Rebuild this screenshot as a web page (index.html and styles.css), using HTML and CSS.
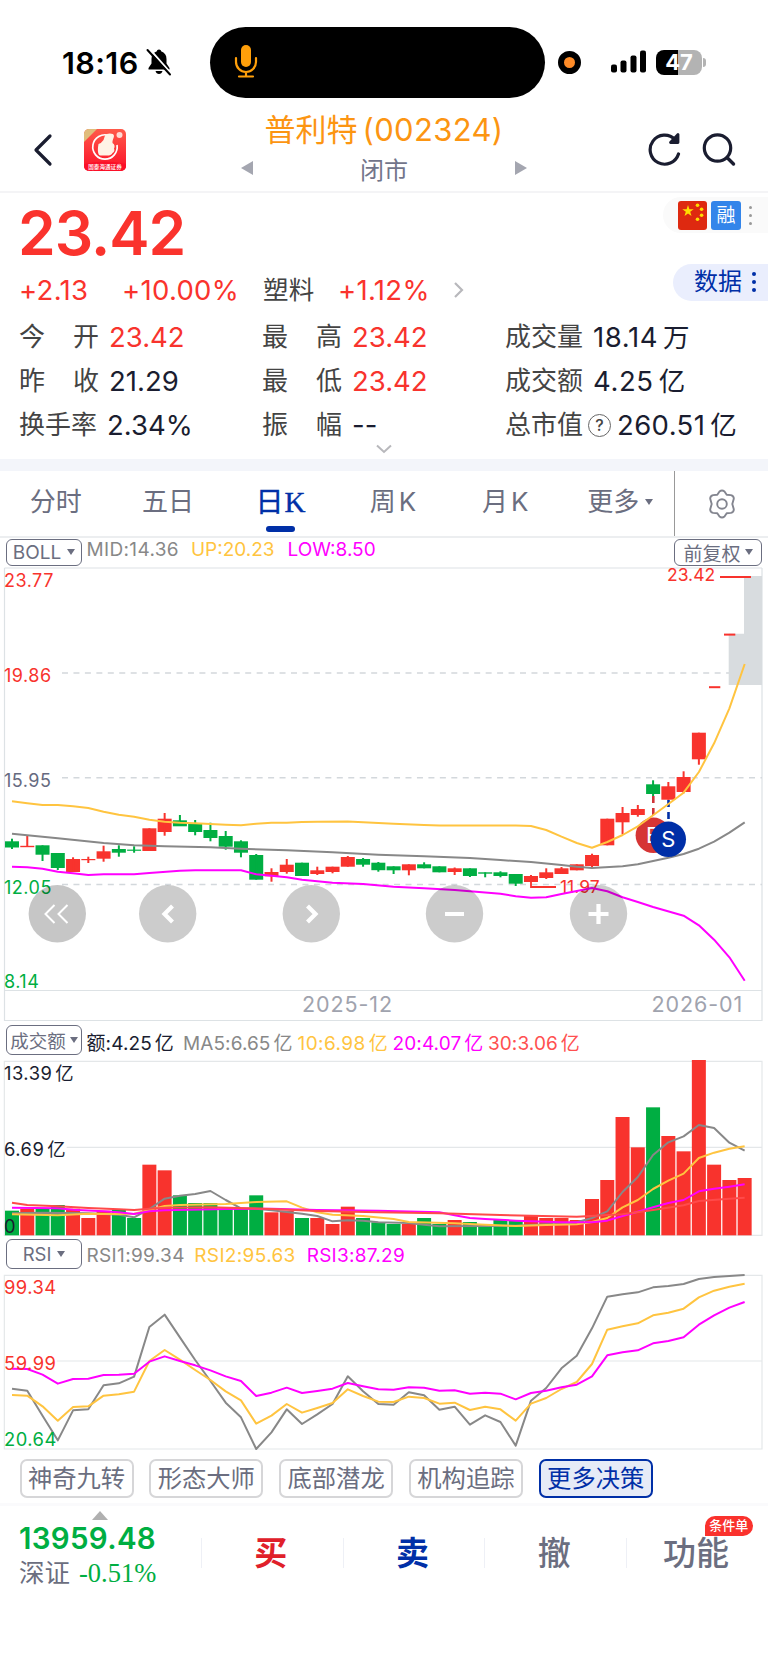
FILE: index.html
```html
<!DOCTYPE html>
<html lang="zh-CN">
<head>
    <meta charset="UTF-8">
    <meta name="viewport" content="width=device-width, initial-scale=1.0">
    <title>普利特(002324)</title>
    <link rel="stylesheet" href="styles.css">
</head>
<body>

    <!-- 状态栏 -->
    <div class="status-bar">
        <span class="time">18:16</span>
        <svg class="bell" width="26" height="28" viewBox="0 0 26 28">
            <path d="M13 1.500c-1.300 0-2 .8-2.100 1.800C7.300 4.400 5.500 7.300 5.500 11v4.500L2.500 20v1.500h21V20l-3-4.500V11c0-3.700-1.800-6.600-5.400-7.700C15 2.300 14.300 1.500 13 1.500z" fill="#000"/>
            <path d="M9.500 23h7c-.5 2-1.800 3-3.500 3s-3-1-3.500-3z" fill="#000"/>
            <path d="M3.500 1l22 25" stroke="#fff" stroke-width="2"/>
            <path d="M1.500 2l22.500 24.500" stroke="#000" stroke-width="2" stroke-linecap="round"/>
        </svg>
        <div class="island">
            <svg width="24" height="36" viewBox="0 0 24 36">
                <rect x="7" y="1" width="10" height="22" rx="5" fill="#ff9f0a"/>
                <path d="M2 14v4a10 10 0 0 0 20 0v-4M12 28v4.500M5 32.500h14" fill="none" stroke="#ff9f0a" stroke-width="2.200" stroke-linecap="round"/>
            </svg>
        </div>
        <span class="rec-dot"></span>
        <svg class="signal" width="36" height="24" viewBox="0 0 36 24">
            <rect x="0" y="14.500" width="6" height="8" rx="2"/>
            <rect x="9.500" y="10.500" width="6" height="12" rx="2"/>
            <rect x="19.500" y="5.500" width="6" height="17" rx="2"/>
            <rect x="29" y="0.500" width="6" height="22" rx="2"/>
        </svg>
        <div class="battery">47</div>
    </div>

    <!-- 标题 -->
    <div class="header">
        <svg class="back" width="20" height="34" viewBox="0 0 20 34"><path d="M17 3L3 17l14 14" fill="none" stroke="#1a1d30" stroke-width="3.200" stroke-linecap="round" stroke-linejoin="round"/></svg>
        <svg class="logo" width="42" height="42" viewBox="0 0 42 42">
            <defs>
                <linearGradient id="logoBg" x1="0" y1="0" x2="0" y2="1">
                    <stop offset="0" stop-color="#ff5a4a"/>
                    <stop offset="1" stop-color="#fb1028"/>
                </linearGradient>
                <clipPath id="logoClip"><rect width="42" height="42" rx="5"/></clipPath>
            </defs>
            <g clip-path="url(#logoClip)">
                <rect width="42" height="42" fill="url(#logoBg)"/>
                <path d="M0 0h13L0 13z" fill="#e0bd7c"/>
                <path d="M0 35q21-5 42 0v7H0z" fill="#fb1028"/>
                <path d="M25 6.500A12.200 12.200 0 1 0 33 16" fill="none" stroke="#fff" stroke-width="1.700"/>
                <path d="M14.500 15q3-1 5-4l1.500-4.500c1-2.500 9-3 9 .5 0 2-2 4.500-1.500 7 2.500 1.500 2.500 4 1.500 5.500 1 2 0 4-1.500 4.500-1 2-3 2.500-5 2.500h-7c-3 0-3-6-2-11.500z" fill="#fff3e6"/>
                <circle cx="35.500" cy="6" r="3" fill="#ffd9d2"/>
            </g>
            <text x="21" y="39.500" class="logo-text">国泰海通证券</text>
        </svg>
        <div class="title">
            <div class="name">普利特<span class="code">(002324)</span></div>
            <div class="state"><i class="tri left"></i><span>闭市</span><i class="tri right"></i></div>
        </div>
        <svg class="refresh" width="36" height="36" viewBox="0 0 36 36"><path d="M31.500 23A14.500 14.500 0 1 1 28 8.500" fill="none" stroke="#1a1d30" stroke-width="3.200" stroke-linecap="round"/><path d="M31 3.500v8h-7.500z" fill="#1a1d30" stroke="#1a1d30" stroke-width="2.800" stroke-linejoin="round"/></svg>
        <svg class="search" width="36" height="36" viewBox="0 0 36 36"><circle cx="16.500" cy="16" r="13.200" fill="none" stroke="#1a1d30" stroke-width="3.200"/><path d="M26.500 26l6 6" stroke="#1a1d30" stroke-width="3.400" stroke-linecap="round"/></svg>
    </div>

    <!-- 报价 -->
    <div class="quote">
        <div class="tags">
            <svg width="29" height="29" viewBox="0 0 29 29">
                <rect width="29" height="29" rx="3" fill="#de2910"/>
                <path d="M10 4l1.400 4.200h4.300l-3.500 2.600 1.300 4.200L10 12.400 6.500 15l1.300-4.200-3.500-2.600h4.300z" fill="#ffde00"/>
                <circle cx="19.500" cy="4.300" r="1.800" fill="#ffde00"/>
                <circle cx="23.600" cy="8.300" r="1.800" fill="#ffde00"/>
                <circle cx="23.600" cy="14.200" r="1.800" fill="#ffde00"/>
                <circle cx="19.500" cy="18.200" r="1.800" fill="#ffde00"/>
            </svg>
            <span class="rong">融</span>
            <span class="dots gray"><i></i><i></i><i></i></span>
        </div>
        <div class="data-btn">数据<span class="dots blue"><i></i><i></i><i></i></span></div>

        <div class="price">23.42</div>
        <div class="change">
            <span class="c1">+2.13</span>
            <span class="c2">+10.00%</span>
            <span class="c3">塑料</span>
            <span class="c4">+1.12%</span>
            <svg width="11" height="18" viewBox="0 0 11 18"><path d="M2 2l7 7-7 7" fill="none" stroke="#b8b8bc" stroke-width="2.200"/></svg>
        </div>
        <div class="stats">
            <div><label><b>今</b><b>开</b></label><span class="red">23.42</span></div>
            <div><label><b>最</b><b>高</b></label><span class="red">23.42</span></div>
            <div><label>成交量</label><span class="wide">18.14<em>万</em></span></div>
            <div><label><b>昨</b><b>收</b></label><span>21.29</span></div>
            <div><label><b>最</b><b>低</b></label><span class="red">23.42</span></div>
            <div><label>成交额</label><span class="wide">4.25<em>亿</em></span></div>
            <div><label>换手率</label><span class="near">2.34%</span></div>
            <div><label><b>振</b><b>幅</b></label><span>--</span></div>
            <div><label>总市值</label><i class="help">?</i><span class="cap">260.51<em>亿</em></span></div>
        </div>
        <svg class="expand" width="16" height="10" viewBox="0 0 16 10"><path d="M1 1.500l7 6.500 7-6.500" fill="none" stroke="#b8b8bc" stroke-width="2"/></svg>
    </div>

    <!-- 周期 -->
    <div class="tabs">
        <div class="tab">分时</div>
        <div class="tab">五日</div>
        <div class="tab active">日<span>K</span></div>
        <div class="tab">周<span>K</span></div>
        <div class="tab">月<span>K</span></div>
        <div class="tab more">更多<i class="caret"></i></div>
        <div class="gear">
            <svg width="32" height="32" viewBox="0 0 32 32" fill="none" stroke="#83858f" stroke-width="1.900" stroke-linejoin="round">
                <path d="M13.500 3.500q2.500-2 5 0l2.200 3.300 4.200.3q3 .7 2.900 3.600L26.300 16l1.500 5.300q.1 2.900-2.900 3.600l-4.200.3-2.200 3.300q-2.500 2-5 0l-2.200-3.300-4.200-.3q-3-.7-2.900-3.600L5.700 16l-1.500-5.300q-.1-2.900 2.900-3.600l4.200-.3z"/>
                <circle cx="16" cy="16" r="4.800"/>
            </svg>
        </div>
    </div>

    <!-- K线 -->
    <div class="ind-bar boll">
        <span class="select">BOLL<i class="caret"></i></span>
        <span class="gray">MID:14.36</span>
        <span class="yellow">UP:20.23</span>
        <span class="pink">LOW:8.50</span>
        <span class="select fq">前复权<i class="caret"></i></span>
    </div>
    <svg id="kline" class="chart" width="768" height="455" viewBox="0 567 768 455">
        <g class="frame">
            <path d="M4.500 568H762" stroke-width="2"/>
            <path d="M4.500 568V1020.500H762V568M4.500 990.500H762"/>
            <path class="dash" d="M62 673H762M62 777.800H762M62 884.500H762"/>
        </g>
        <path d="M744 576h18v109h-33.300v-51.300H744z" fill="#d8dcdf"/>
        <text x="4" y="587" class="axis red">23.77</text>
        <text x="4" y="682" class="axis red">19.86</text>
        <text x="4" y="787" class="axis">15.95</text>
        <text x="4" y="894" class="axis green">12.05</text>
        <text x="4" y="987.500" class="axis green">8.14</text>
        <g id="candles"></g>
        <text x="667" y="581" class="axis peak red">23.42</text>
        <path d="M720 577h31M531 882v5h25" class="mark"/>
        <text x="560" y="892.500" class="axis peak red">11.97</text>
        <path d="M653.300 796v19" stroke="#d03438" stroke-width="2.600" stroke-dasharray="7 5"/>
        <path d="M668.500 800v19" stroke="#002fa7" stroke-width="2.600" stroke-dasharray="7 5"/>
        <circle cx="653.300" cy="835.300" r="17.700" fill="#d63535"/>
        <text x="653.300" y="842.500" class="bs">B</text>
        <g id="bollLines"></g>
        <circle cx="668.300" cy="839.300" r="17.700" fill="#002fa7"/>
        <text x="668.300" y="846.700" class="bs">S</text>
        <text x="302" y="1011.500" class="date">2025-12</text>
        <text x="651.500" y="1011.500" class="date">2026-01</text>
        <g class="ctrl">
            <circle cx="57.300" cy="913.700" r="28.700"/>
            <circle cx="167.700" cy="913.700" r="28.700"/>
            <circle cx="311.300" cy="913.700" r="28.700"/>
            <circle cx="454.500" cy="913.700" r="28.700"/>
            <circle cx="598.500" cy="913.700" r="28.700"/>
            <path d="M54.500 905l-9 9 9 9M67.500 905l-9 9 9 9" stroke-width="2"/>
            <path d="M172.500 906l-8 8 8 8M307.500 906l8 8-8 8M445 914h19M588.500 914h20M598.500 904v20" stroke-width="4.200"/>
        </g>
    </svg>

    <!-- 成交额 -->
    <div class="ind-bar vol">
        <span class="select">成交额<i class="caret"></i></span>
        <span class="dark">额:4.25<em>亿</em></span>
        <span class="gray">MA5:6.65<em>亿</em></span>
        <span class="yellow">10:6.98<em>亿</em></span>
        <span class="pink">20:4.07<em>亿</em></span>
        <span class="coral">30:3.06<em>亿</em></span>
    </div>
    <svg id="volume" class="chart" width="768" height="178" viewBox="0 120 2304 534">
        <path class="frame3" d="M13 124H2286V646H13zM200 382H2286"/>
        <g id="bars"></g>
        <g id="maLines"></g>
        <text x="12" y="181" class="axis3">13.39<tspan dx="9">亿</tspan></text>
        <text x="12" y="408" class="axis3">6.69<tspan dx="9">亿</tspan></text>
        <text x="12" y="638" class="axis3">0</text>
    </svg>

    <!-- RSI -->
    <div class="ind-bar rsi">
        <span class="select">RSI<i class="caret"></i></span>
        <span class="gray">RSI1:99.34</span>
        <span class="yellow">RSI2:95.63</span>
        <span class="pink">RSI3:87.29</span>
    </div>
    <svg id="rsi" class="chart" width="768" height="178" viewBox="0 100 2304 534">
        <path class="frame3" d="M13 107H2286V628H13zM170 364H2286"/>
        <g id="rsiLines"></g>
        <text x="12" y="162" class="axis3 red">99.34</text>
        <text x="12" y="391" class="axis3 red">59.99</text>
        <text x="12" y="620" class="axis3 green">20.64</text>
    </svg>

    <div class="chips">
        <span>神奇九转</span>
        <span>形态大师</span>
        <span>底部潜龙</span>
        <span>机构追踪</span>
        <span class="on">更多决策</span>
    </div>

    <!-- 底部栏 -->
    <div class="footer">
        <div class="index">
            <i class="up"></i>
            <div class="point">13959.48</div>
            <div class="pct">深证<span>-0.51%</span></div>
        </div>
        <div class="act buy">买</div>
        <div class="act sell">卖</div>
        <div class="act">撤</div>
        <div class="act">功能<span class="badge">条件单</span></div>
    </div>

    <script>
        const NS = 'http://www.w3.org/2000/svg';

        function add(parent, tag, attrs) {
            const el = document.createElementNS(NS, tag);
            for (const key in attrs) el.setAttribute(key, attrs[key]);
            document.getElementById(parent).appendChild(el);
        }

        // [索引, y] 点画折线
        function line(parent, points, color, width, x0, step) {
            add(parent, 'polyline', {
                points: points.map(p => (x0 + p[0] * step).toFixed(1) + ',' + p[1]).join(' '),
                fill: 'none', stroke: color, 'stroke-width': width, 'stroke-linejoin': 'round'
            });
        }

        const RED = '#f8332d', GREEN = '#00ae42';
        const GRAY = '#888', YELLOW = '#ffc440', PINK = '#ff00ff', CORAL = '#ff4a4a';

        // 蜡烛: [颜色, 实体上, 实体下, 最高, 最低]
        const candles = [
            ['g',841.3,847.5,838.7,849], ['r',845.8,847.2,836,847], ['g',845.3,854.7,845.3,861], ['g',853,868,853,870],
            ['r',859,872,857.3,872], ['r',859,860.2,856.7,863], ['r',851.3,858.7,845.7,861.7], ['g',849,852.7,845.3,856.7],
            ['g',849.6,850.8,846.3,852.7], ['r',828.3,851,828.3,851], ['r',818.7,832,813,835.7], ['g',820.3,826.3,815,826],
            ['g',824,832,820,835.3], ['g',830,838,822.7,841.3], ['g',836,846.7,831,849.7], ['g',841.3,852.7,840.3,857.3],
            ['g',855,879.7,854,879.7], ['r',872,876.3,868.3,881.7], ['r',864.7,872,859,873.7], ['g',862.7,876,862.7,876],
            ['r',870.3,874,866.7,875], ['r',866.7,872,866.7,873.3], ['r',857,866.7,856,866.7], ['g',859,864.7,858,866.7],
            ['g',862.7,870.2,862,871.7], ['g',866.3,870.3,866.3,874], ['r',864.3,870.3,864.3,875.3], ['g',864.3,868.3,862.3,868.3],
            ['g',866.3,872.3,866.3,872.3], ['r',868.3,872,867.5,875], ['g',868.3,876,868.3,877], ['g',872.3,873.7,872.3,877.3],
            ['g',872.3,876,871.3,877.3], ['g',874,883.7,874,886], ['r',876,882,875,882], ['r',872.3,878,868.3,879],
            ['r',868.3,874,867,874], ['r',864.3,870.3,864.3,870.3], ['r',855,866,853.7,867.3], ['r',818.7,845.3,818.7,845.3],
            ['r',813,822.3,807,834], ['r',809,815,805,816.7], ['g',784.3,794,780.3,796], ['r',786.3,799.7,782,799.7],
            ['r',777,792,771.3,793.3], ['r',732.7,759.3,732.7,764.7]
        ];
        candles.forEach((c, i) => {
            const x = 12 + i * 15.264, fill = c[0] === 'r' ? RED : GREEN;
            add('candles', 'rect', { x: x - 7, y: c[1], width: 14, height: c[2] - c[1], fill: fill });
            add('candles', 'rect', { x: x - 1, y: c[3], width: 2, height: c[4] - c[3], fill: fill });
        });
        add('candles', 'rect', { x: 709, y: 686.2, width: 11.3, height: 2, fill: RED });
        add('candles', 'rect', { x: 724, y: 633.6, width: 11.3, height: 2, fill: RED });

        const up = [[0,801.3],[1,803.3],[2,805],[3,805],[4,806.3],[5,808],[6,811.7],[7,814.7],[8,816.7],[9,819.7],[10,821.7],[11,822.7],[12,823.3],[13,824],[14,824.7],[15,825.3],[16,823.7],[17,822.7],[18,822.7],[19,822],[20,821.7],[22,821.5],[23,822.3],[25,823.7],[27,825],[28,825.6],[31,825.4],[33,825.6],[34,826],[35,830],[36,836.7],[37,843],[38,847.7],[39,842],[40,835],[41,826.3],[42,815.3],[43,804],[44,792.7],[45,772],[46,743.3],[47,708.3],[48,664]];
        const mid = [[0,833.7],[3,838.3],[6,843],[8,845.3],[10,846.3],[13,847.3],[15,848.7],[18,850.3],[21,852.3],[24,854.7],[27,856.3],[30,858],[32,860],[34,862],[36,865],[37,866.7],[38,868],[40,866.3],[41,864.3],[43,857.7],[44,854],[45,848.7],[46,841.7],[47,832.7],[48,822.3]];
        const low = [[0,866.7],[1,867.3],[2,868.7],[3,871.7],[4,873.3],[5,875],[6,874.3],[8,874.3],[9,873],[11,870.7],[12,870.3],[15,870.3],[16,874.3],[18,877.3],[19,879.7],[21,882.7],[23,884],[25,886.7],[27,888.3],[29,890],[32,893.7],[33,896.3],[34,897.7],[35,897.3],[36,894],[38,888],[39,891.3],[40,897.3],[41,902],[42,907],[44,915.7],[45,925.3],[46,939.7],[47,957.3],[48,980.7]];
        line('bollLines', mid, GRAY, 2, 12, 15.264);
        line('bollLines', up, YELLOW, 2, 12, 15.264);
        line('bollLines', low, PINK, 2, 12, 15.264);

        // 成交额柱
        const tops = [572,566,566,555,566,594,572,569,594,434,451,526,549,549,566,566,526,577,572,594,594,612,560,594,607,612,612,594,612,600,606,617,600,600,588,594,594,600,537,480,291,382,262,348,394,119,434,480,474];
        const dirs = 'grggrrrggrrgggggg' + 'rrgrrrgggrggrggggrrrrrrrrgrrrrrr';
        tops.forEach((top, i) => {
            add('bars', 'rect', { x: 36 + i * 45.79 - 21, y: top, width: 42, height: 646 - top, fill: dirs[i] === 'r' ? RED : GREEN });
        });
        const ma5 = [[0,580],[2,578],[5,580],[7,584],[8,592],[9,567],[10,536],[11,527],[12,522],[13,513],[14,540],[15,565],[16,566],[17,571],[18,576],[19,581],[20,588],[21,604],[22,601],[23,602],[24,607],[26,609],[27,614],[28,619],[31,618],[33,617],[35,613],[36,612],[37,607],[38,594],[39,574],[40,516],[41,471],[42,405],[43,367],[44,349],[45,315],[46,324],[47,368],[48,392]];
        const ma10 = [[0,583],[3,586],[5,581],[7,582],[8,581],[9,570],[10,558],[11,555],[14,552],[16,546],[18,544],[19,563],[20,577],[21,584],[23,588],[25,597],[26,606],[29,610],[31,614],[33,618],[35,615],[37,613],[38,606],[39,594],[40,562],[41,540],[42,507],[43,482],[44,461],[45,414],[46,398],[47,386],[48,379]];
        const ma20 = [[0,563],[3,565],[4,569],[6,574],[7,577],[8,582],[9,574],[10,571],[14,567],[17,566],[20,570],[24,572],[28,577],[29,586],[30,594],[31,597],[33,602],[36,607],[38,607],[39,602],[40,588],[41,575],[42,562],[43,549],[44,540],[45,514],[46,506],[47,500],[48,493]];
        const ma30 = [[0,548],[1,555],[3,559],[5,564],[7,568],[8,570],[9,566],[10,563],[13,562],[17,567],[20,573],[24,577],[28,580],[32,585],[37,590],[40,583],[42,570],[44,556],[45,543],[47,536],[48,533]];
        line('maLines', ma5, GRAY, 6, 36, 45.79);
        line('maLines', ma10, YELLOW, 6, 36, 45.79);
        line('maLines', ma20, PINK, 6, 36, 45.79);
        line('maLines', ma30, CORAL, 6, 36, 45.79);

        // RSI
        const rsi1 = [447,453,528,602,512,509,437,431,411,262,225,293,361,424,489,533,628,578,509,553,524,493,410,455,493,495,458,467,510,501,555,527,547,618,483,445,386,348,266,171,164,158,143,139,133,118,112,109,106];
        const rsi2 = [466,468,500,543,502,500,468,464,456,364,331,360,391,421,455,482,552,528,493,519,505,490,449,469,486,487,471,475,492,489,511,501,509,543,492,475,448,427,373,270,260,251,227,219,207,173,153,141,132];
        const rsi3 = [387,388,405,432,418,417,406,405,402,366,350,364,377,392,410,424,469,459,444,460,454,447,430,440,449,450,443,444,453,452,462,459,462,479,460,453,443,435,410,347,338,332,311,304,293,255,227,204,187];
        [[rsi1, GRAY], [rsi2, YELLOW], [rsi3, PINK]].forEach(r => {
            line('rsiLines', r[0].map((y, i) => [i, y]), r[1], 6, 36, 45.79);
        });
    </script>
</body>
</html>
```
FILE: styles.css
```css
* {
    box-sizing: border-box;
}

body {
    margin: 0;
    width: 768px;
    height: 1670px;
    overflow: hidden;
    background: #fff;
    font-family: Inter, "Noto Sans CJK SC", sans-serif;
    color: #1a1d30;
}

i, em {
    font-style: normal;
}

svg {
    display: block;
    flex: none;
}

.red { color: #f8332d; fill: #f8332d; }
.green { color: #00ae42; fill: #00ae42; }
.gray { color: #888; }
.yellow { color: #ffc440; }
.pink { color: #ff00ff; }
.coral { color: #ff5050; }
.dark { color: #1a1d30; }

/* 状态栏 */
.status-bar {
    display: flex;
    align-items: center;
    height: 98px;
    padding: 26px 0 0 62px;
}

.time {
    width: 84px;
    font-size: 30.5px;
    font-weight: 600;
    letter-spacing: 0.4px;
    color: #000;
}

.island {
    width: 335px;
    height: 71px;
    margin-left: 38px;
    padding: 17px 0 0 24px;
    border-radius: 36px;
    background: #000;
}

.rec-dot {
    width: 23px;
    height: 23px;
    margin-left: 13px;
    border: 6px solid #000;
    border-radius: 50%;
    background: #ff8c28;
}

.signal {
    margin-left: 30px;
}

.battery {
    position: relative;
    width: 46px;
    height: 25px;
    margin-left: 9px;
    border-radius: 8px;
    background: linear-gradient(90deg, #000 48%, #b3b3b3 48%);
    color: #fff;
    font-size: 22px;
    font-weight: 700;
    line-height: 25px;
    text-align: center;
}

.battery::after {
    content: "";
    position: absolute;
    right: -4px;
    top: 8px;
    width: 3px;
    height: 9px;
    border-radius: 0 3px 3px 0;
    background: #b3b3b3;
}

/* 标题 */
.header {
    display: flex;
    height: 95px;
    border-bottom: 2px solid #f4f4f6;
}

.back { margin: 35px 0 0 33px; }
.logo { margin: 31px 0 0 31px; }

.logo-text {
    font-size: 5.6px;
    font-weight: 500;
    fill: #fff;
    text-anchor: middle;
}

.title {
    width: 290px;
    margin-left: 113px;
    text-align: center;
}

.name {
    height: 54px;
    padding-top: 9px;
    font-size: 31px;
    line-height: 46px;
    color: #fc9512;
    white-space: nowrap;
}

.code {
    margin-left: 5px;
    letter-spacing: 0.35px;
}

.state {
    display: flex;
    justify-content: space-between;
    align-items: center;
    height: 32px;
    padding: 0 2px;
    font-size: 24px;
    color: #72758a;
}

.tri {
    border: 7px solid transparent;
}

.tri.left { border-right: 12px solid #a4a6b0; border-left: 0; }
.tri.right { border-left: 12px solid #a4a6b0; border-right: 0; }

.refresh { margin: 33px 0 0 118px; }
.search { margin: 34px 0 0 18px; }

/* 报价 */
.quote {
    position: relative;
    height: 266px;
    padding: 5px 0 0 20px;
}

.tags {
    position: absolute;
    right: 0;
    top: 4px;
    display: flex;
    align-items: center;
    gap: 4px;
    width: 105px;
    height: 36px;
    padding-left: 15px;
    border-radius: 18px 0 0 18px;
    background: #fafafa;
}

.rong {
    width: 30px;
    height: 29px;
    border-radius: 3px;
    background: #3385ea;
    color: #fff;
    font-size: 19px;
    line-height: 29px;
    text-align: center;
}

.dots {
    display: flex;
    flex-direction: column;
}

.dots i {
    border-radius: 50%;
}

.dots.gray { gap: 5px; margin-left: 4px; }
.dots.gray i { width: 3px; height: 3px; background: #999; }
.dots.blue { gap: 4px; margin-left: 10px; }
.dots.blue i { width: 4px; height: 4px; background: #002fa7; }

.data-btn {
    position: absolute;
    right: 0;
    top: 71px;
    display: flex;
    align-items: center;
    width: 95px;
    height: 37px;
    padding: 0 0 1px 21px;
    border-radius: 19px 0 0 19px;
    background: #eaeefd;
    color: #002fa7;
    font-size: 24px;
    line-height: 34px;
}

.price {
    height: 69px;
    margin-left: -2px;
    font-size: 60.5px;
    font-weight: 600;
    line-height: 71px;
    letter-spacing: -1px;
    color: #fa332d;
}

.change {
    display: flex;
    align-items: center;
    height: 46px;
    font-size: 27.500px;
    line-height: 46px;
    letter-spacing: 0.3px;
    color: #fa332d;
}

.c1 { width: 103px; margin-left: -1px; }
.c2 { width: 141px; }
.c3 { width: 75px; font-size: 25.5px; color: #444; }
.c4 { width: 115px; }

.stats {
    display: grid;
    grid-template-columns: 243px 243px 262px;
    grid-auto-rows: 44px;
    padding-top: 2px;
}

.stats div {
    display: flex;
    align-items: center;
    font-size: 27.5px;
    line-height: 44px;
    white-space: nowrap;
}

.stats label {
    display: flex;
    justify-content: space-between;
    width: 80px;
    margin: 0 10px 0 -1px;
    font-size: 26px;
    color: #444;
}

.stats b {
    font-weight: 400;
}

.stats em {
    margin-left: 5px;
    font-size: 26.5px;
}

.stats .near { margin-left: -2px; }

.stats .wide {
    margin-left: -2px;
    letter-spacing: 0.6px;
}

.help {
    width: 23px;
    height: 23px;
    margin-left: -7px;
    border: 1.5px solid #666;
    border-radius: 50%;
    font-size: 16px;
    font-weight: 500;
    line-height: 20px;
    text-align: center;
    color: #444;
}

.stats .cap {
    margin-left: 6px;
    letter-spacing: 0.4px;
}

.expand {
    position: absolute;
    left: 376px;
    bottom: 5px;
}

/* 周期 */
.tabs {
    display: grid;
    grid-template-columns: repeat(6, 112.4px) 1fr;
    height: 79px;
    border-top: 12px solid #f3f5fa;
    border-bottom: 2px solid #eceef0;
}

.tab {
    position: relative;
    display: flex;
    justify-content: center;
    align-items: center;
    padding: 0 1px 3px 0;
    font-size: 26px;
    line-height: 38px;
    color: #6b6e80;
}

.tab span {
    margin-left: 3px;
}

.tab.active {
    font-size: 28px;
    color: #002fa7;
    -webkit-text-stroke: 0.4px #002fa7;
}

.tab.active span {
    margin-left: 1px;
    font-family: "Liberation Serif", serif;
    font-size: 29px;
}

.tab.active::after {
    content: "";
    position: absolute;
    bottom: 4px;
    width: 29px;
    height: 6px;
    border-radius: 3px;
    background: #002fa7;
}

.tab.more {
    padding-left: 5px;
}

.caret {
    margin-left: 6px;
    border: 4.500px solid transparent;
    border-top: 6px solid #6b6e80;
    border-bottom: 0;
}

.gear {
    display: flex;
    align-items: center;
    justify-content: center;
    border-left: 1px solid #999;
}

/* 指标栏 */
.ind-bar {
    display: flex;
    align-items: center;
    padding: 0 6px;
    font-size: 19px;
    letter-spacing: 0.35px;
    white-space: nowrap;
}

.ind-bar em {
    margin-left: 3px;
}

.select {
    display: flex;
    align-items: center;
    justify-content: center;
    width: 76px;
    height: 30px;
    margin-right: 4.5px;
    border: 1.5px solid #6b6e80;
    border-radius: 6px;
    color: #6b6e80;
    font-size: 18.5px;
    letter-spacing: 0;
}

.boll { height: 29px; padding-bottom: 1px; }
.boll .select { height: 27px; font-size: 19px; }
.boll > .gray, .boll .yellow, .boll .pink { margin-top: -5px; }
.boll .yellow { margin-left: 12px; letter-spacing: 0; }
.boll .pink { margin-left: 13px; letter-spacing: 0; }
.boll .fq { width: 88px; margin: 0 0 0 auto; }
.boll .fq .caret { margin-left: 4px; }

.vol { height: 38px; letter-spacing: 0.1px; }
.vol .select { margin-top: -2px; }
.vol .select .caret { margin-left: 4px; }
.vol .gray { margin-left: 9px; }
.vol .yellow { margin-left: 5px; letter-spacing: 0.4px; }
.vol .pink, .vol .coral { margin-left: 4.5px; letter-spacing: 0.1px; }

.rsi { height: 35.4px; padding-bottom: 3px; }
.rsi > .gray, .rsi .yellow, .rsi .pink { margin-top: 3px; }
.rsi .yellow { margin-left: 9.5px; }
.rsi .pink { margin-left: 11px; letter-spacing: 0.25px; }

/* 图表 */
.frame path {
    fill: none;
    stroke: #dde2e5;
    stroke-width: 1.2;
}

.frame .dash {
    stroke: #d3d8dc;
    stroke-width: 1.6;
    stroke-dasharray: 6 5.45;
}

.frame3 {
    fill: none;
    stroke: #e4e7e9;
    stroke-width: 3.5;
}

.axis {
    font-size: 18px;
    letter-spacing: 0.5px;
    fill: #666a80;
}

.axis3 {
    font-size: 55px;
    letter-spacing: 1.5px;
    fill: #1a1d30;
}

.axis.red, .axis3.red { fill: #f8332d; }
.axis.green, .axis3.green { fill: #00ae42; }

.axis.peak {
    font-size: 17.5px;
    letter-spacing: 0;
}

.date {
    font-size: 21.5px;
    letter-spacing: 0.9px;
    fill: #a0a3ae;
}

.mark {
    fill: none;
    stroke: #f8332d;
    stroke-width: 1.8;
}

.bs {
    font-size: 22px;
    fill: #fff;
    text-anchor: middle;
}

.ctrl circle {
    fill: #000;
    opacity: 0.2;
}

.ctrl circle:first-child {
    opacity: 0.225;
}

.ctrl path {
    fill: none;
    stroke: #fff;
}

/* 决策 */
.chips {
    display: flex;
    gap: 15.8px;
    height: 52px;
    padding: 8px 0 0 19.5px;
}

.chips span {
    width: 114px;
    height: 39px;
    border: 2px solid #d6d6d8;
    border-radius: 7px;
    font-size: 24.3px;
    line-height: 34px;
    text-align: center;
    color: #6b6e80;
}

.chips .on {
    border-color: #002fa7;
    background: #e6ebf7;
    color: #002fa7;
}

/* 底部栏 */
.footer {
    display: flex;
    height: 166px;
    border-top: 3px solid #fafafc;
}

.index {
    width: 201px;
    padding: 5px 0 0 19px;
}

.up {
    display: block;
    width: 0;
    margin-left: 73px;
    border: 8px solid transparent;
    border-top: 0;
    border-bottom: 9px solid #b0b0b0;
}

.point {
    height: 36px;
    font-size: 29.5px;
    font-weight: 600;
    line-height: 36px;
    letter-spacing: 0.3px;
    color: #00ae42;
}

.pct {
    font-size: 25.5px;
    line-height: 34px;
    color: #6b6e80;
}

.pct span {
    margin-left: 9px;
    font-family: "Liberation Serif", serif;
    font-size: 26.5px;
    color: #00ae42;
}

.act {
    position: relative;
    width: 141.7px;
    height: 30px;
    margin-top: 32px;
    padding-right: 3px;
    border-left: 1px solid #eef0f6;
    font-size: 33px;
    font-weight: 500;
    line-height: 30px;
    text-align: center;
    color: #6b6e80;
}

.act.buy { color: #e0202a; font-weight: 700; }
.act.sell { color: #002fa7; font-weight: 700; }

.badge {
    position: absolute;
    right: 15px;
    top: -22px;
    width: 48px;
    height: 20px;
    border-radius: 10px 10px 10px 0;
    background: #fa322d;
    color: #fff;
    font-size: 13px;
    line-height: 19px;
}
```
